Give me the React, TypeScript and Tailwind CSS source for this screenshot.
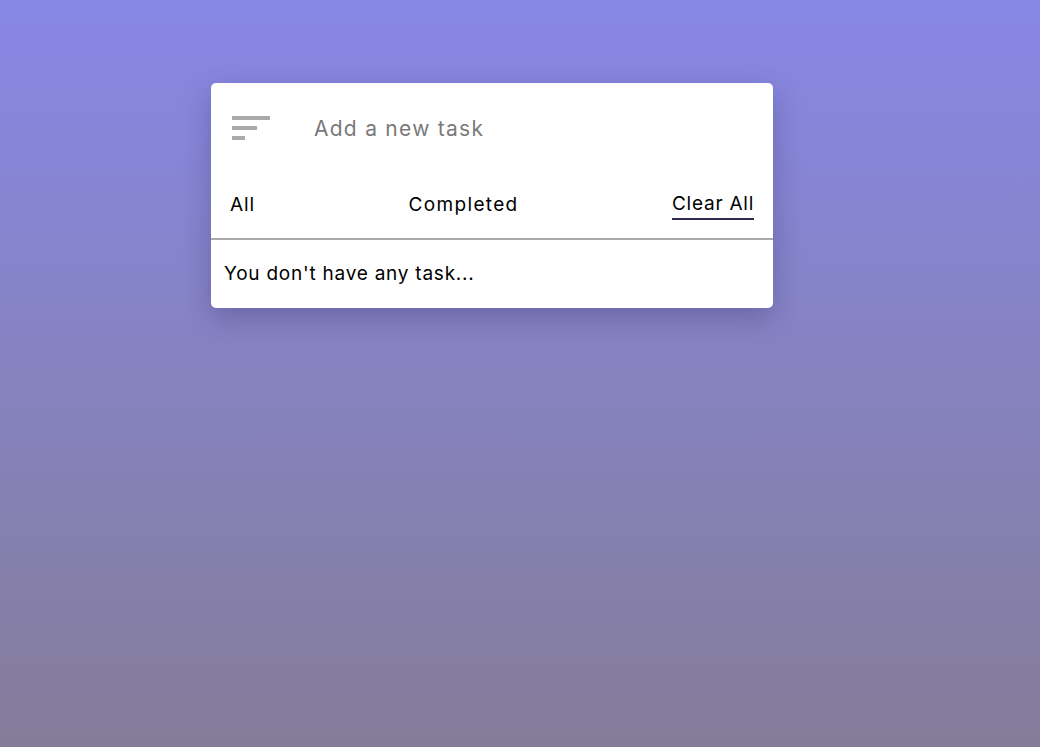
import { useState } from 'react'

function SortIcon() {
  return (
    <svg width="38" height="26" viewBox="0 0 38 26" className="shrink-0">
      <rect x="0" y="0" width="38" height="4" fill="#aaaaaa" />
      <rect x="0" y="10" width="25" height="4" fill="#aaaaaa" />
      <rect x="0" y="20" width="13" height="4" fill="#aaaaaa" />
    </svg>
  )
}

export default function App() {
  const [task, setTask] = useState('')
  const tasks: string[] = []

  return (
    <div
      className="min-h-screen w-full bg-gradient-to-b from-[#8787e6] to-[#857c99] pt-[83px] pl-[211px]"
      style={{ fontFamily: '"Inter", "Noto Sans", sans-serif' }}
    >
      <div className="w-[562px] rounded-[5px] bg-white shadow-[0_10px_28px_rgba(40,30,80,0.28)]">
        <div className="flex h-[92px] items-center px-[21px]">
          <SortIcon />
          <input
            value={task}
            onChange={(e) => setTask(e.target.value)}
            placeholder="Add a new task"
            className="ml-[44px] flex-1 bg-transparent text-[21px] tracking-[0.06em] text-[#333] outline-none placeholder:text-[#7a7a7a]"
          />
        </div>
        <div className="flex h-[63px] items-start justify-between px-[19px] pt-[16px]">
          <span className="text-[19px] leading-[28px] tracking-[0.05em] text-black">All</span>
          <span className="text-[19px] leading-[28px] tracking-[0.07em] text-black">Completed</span>
          <button className="border-b-2 border-[#2e2a4f] pb-[1px] text-[19px] leading-[26px] tracking-[0.04em] text-black">
            Clear All
          </button>
        </div>
        <div className="h-[2px] bg-[#aaaaaa]" />
        <ul className="px-[13px] py-[21px]">
          {tasks.length === 0 && (
            <li className="text-[19px] leading-[26px] tracking-[0.04em] text-black">You don't have any task...</li>
          )}
        </ul>
      </div>
    </div>
  )
}
